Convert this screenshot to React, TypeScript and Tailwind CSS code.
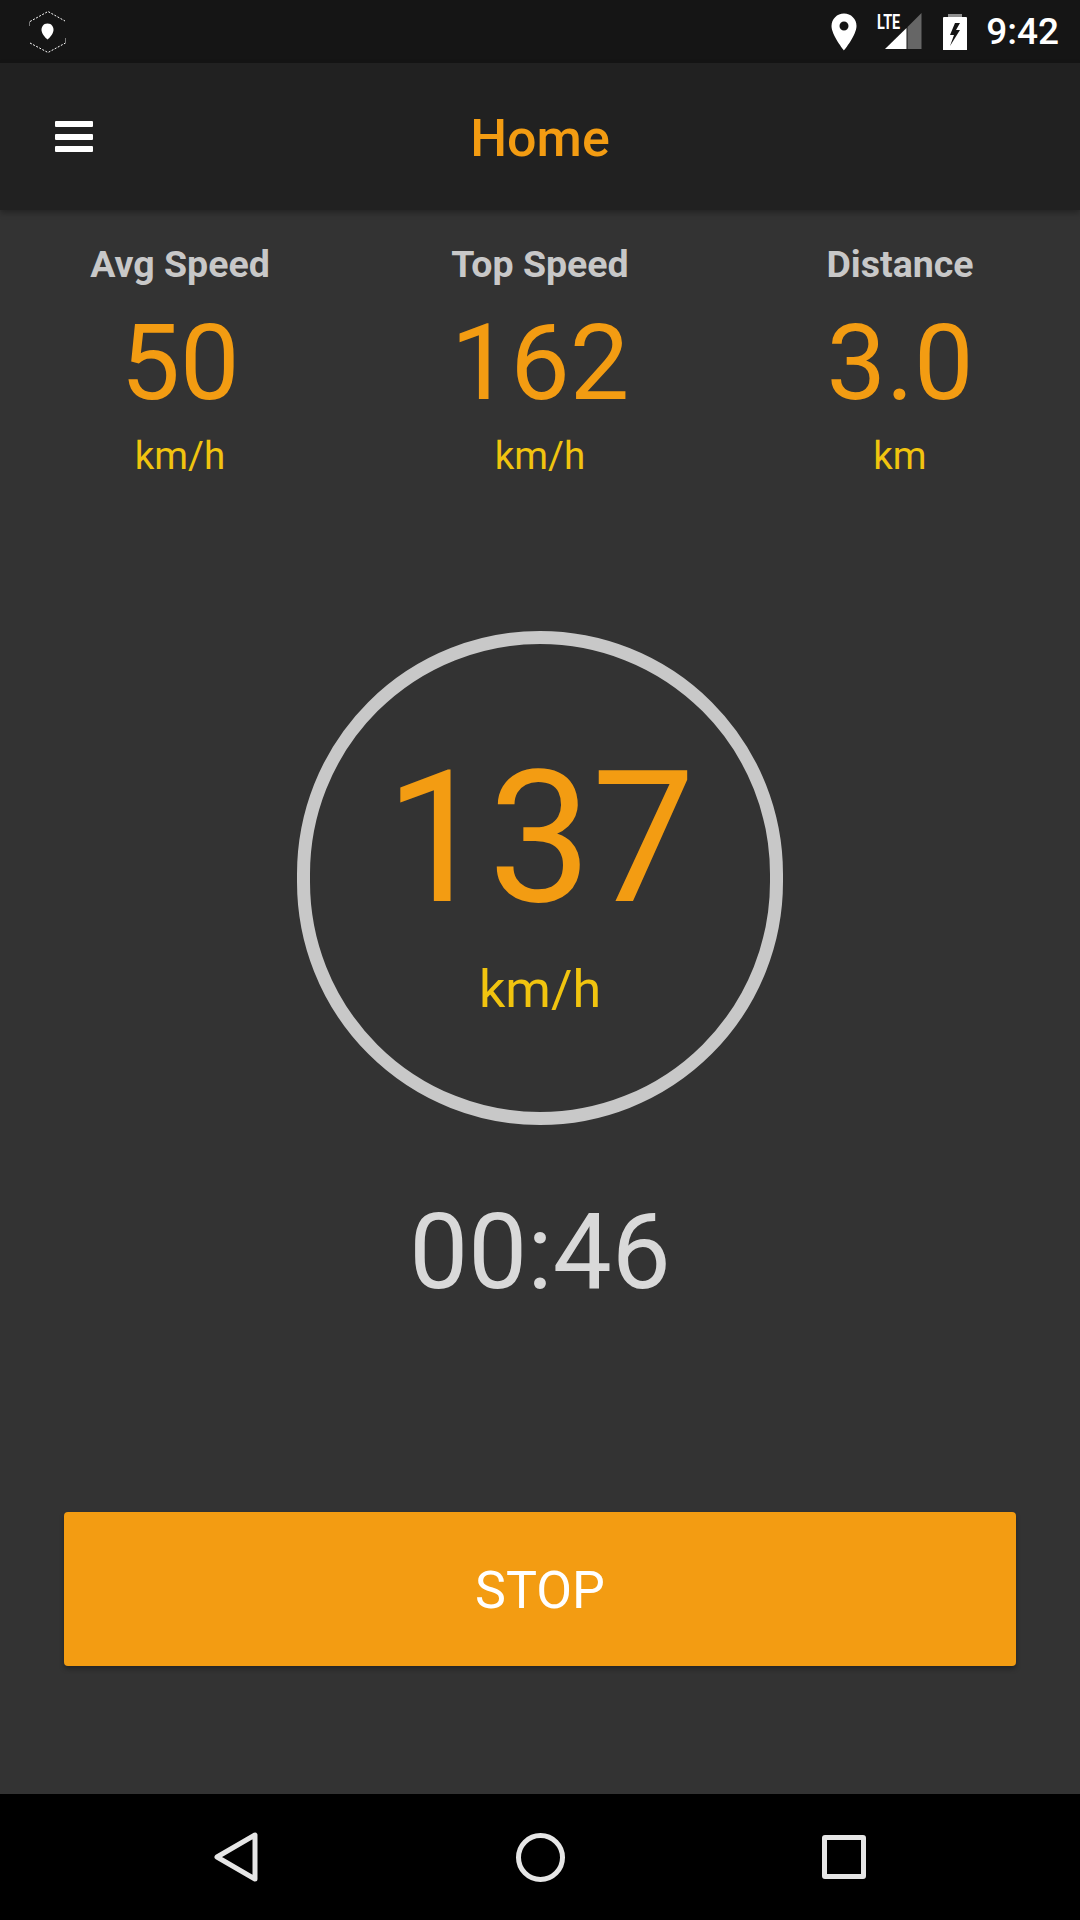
const stats = [
  { label: 'Avg Speed', value: '50', unit: 'km/h' },
  { label: 'Top Speed', value: '162', unit: 'km/h' },
  { label: 'Distance', value: '3.0', unit: 'km' },
]

function StatusBar() {
  return (
    <div className="h-[63px] bg-[#151515] flex items-center pl-[29px] pr-[21px]">
      <svg width="38" height="42" viewBox="0 0 38 42" fill="none">
        <path d="M1 10.500 L19 0.500 L36 10 M1 32 L19 41.500 L36.500 32" stroke="#fff" strokeWidth="1" strokeDasharray="2 1.500" />
        <path d="M0.500 10.500 V15 M36.500 27 V32" stroke="#777" strokeWidth="1" />
        <path d="M18.500 12.500 C23 12.500 24.500 16 24.500 19 C24.500 22.500 20.500 27 18.500 28.500 C16.500 27 12.500 22.500 12.500 19 C12.500 16 14 12.500 18.500 12.500 Z" fill="#fff" />
      </svg>
      <div className="ml-auto flex items-center">
        <svg width="26" height="38" viewBox="0 0 26 38">
          <path fillRule="evenodd" d="M13 0.500 C6 0.500 0.500 6 0.500 13 C0.500 22 13 37.500 13 37.500 C13 37.500 25.500 22 25.500 13 C25.500 6 20 0.500 13 0.500 Z M13 8.500 A4.500 4.500 0 1 1 13 17.500 A4.500 4.500 0 1 1 13 8.500 Z" fill="#fff" />
        </svg>
        <div className="relative w-[46px] h-[37px] ml-[19px]">
          <svg className="absolute left-0 top-0" width="46" height="37" viewBox="0 0 46 37">
            <path d="M45.500 0 V36 H31.500 V14 Z" fill="#666666" />
            <path d="M30.500 15 V36 H9 Z" fill="#fff" />
          </svg>
          <span className="absolute left-[1px] top-[-1px] text-[20px] leading-[20px] font-bold text-white scale-x-[0.72] origin-left">LTE</span>
        </div>
        <svg className="ml-[21px]" width="24" height="36" viewBox="0 0 24 36">
          <path d="M5 0 H19 V4 H5 Z" fill="#8f8f8f" />
          <path fillRule="evenodd" d="M1 3 H23 Q24 3 24 4 V36 H0 V4 Q0 3 1 3 Z M12 9 L7 21 H11 L7 32 L17 16 H13 L17 9 Z" fill="#fff" />
        </svg>
        <span className="ml-[19px] text-[37px] leading-none font-medium text-white">9:42</span>
      </div>
    </div>
  )
}

function Stat({ label, value, unit }: { label: string; value: string; unit: string }) {
  return (
    <div className="flex flex-col items-center">
      <div className="text-[37.500px] leading-[42px] font-bold text-[#c8c8c8]">{label}</div>
      <div className="mt-[17px] text-[106px] leading-[122px] text-[#f39c12]">{value}</div>
      <div className="mt-[10px] text-[38.500px] leading-[44px] text-[#f1c40f]">{unit}</div>
    </div>
  )
}

function NavBar() {
  return (
    <div className="h-[126px] bg-black grid grid-cols-[258px_1fr_258px] items-center">
      <svg className="justify-self-end" width="44" height="50" viewBox="0 0 44 50" fill="none">
        <path d="M41 3 V47 L3 25 Z" stroke="#e6e6e6" strokeWidth="5" strokeLinejoin="round" />
      </svg>
      <div className="justify-self-center w-[49px] h-[49px] rounded-full border-[5px] border-[#e6e6e6]" />
      <div className="justify-self-start w-[44px] h-[44px] rounded-[3px] border-[5px] border-[#e6e6e6]" />
    </div>
  )
}

export default function App() {
  return (
    <div className="w-[1080px] h-[1920px] flex flex-col bg-[#333333] font-['Roboto',sans-serif] overflow-hidden">
      <StatusBar />
      <header className="relative h-[147px] bg-[#212121] shadow-[0_3px_6px_rgba(0,0,0,0.3)] flex items-center justify-center">
        <div className="absolute left-[55px] top-[58px] w-[38px] flex flex-col gap-[6.500px]">
          <span className="h-[6px] bg-white rounded-[1px]" />
          <span className="h-[6px] bg-white rounded-[1px]" />
          <span className="h-[6px] bg-white rounded-[1px]" />
        </div>
        <h1 className="pt-[4px] text-[52px] font-medium text-[#f39c12]">Home</h1>
      </header>
      <main className="flex-1 flex flex-col items-center">
        <div className="w-full grid grid-cols-3 pt-[33px]">
          {stats.map(s => (
            <Stat key={s.label} {...s} />
          ))}
        </div>
        <div className="mt-[153px] w-[486px] h-[494px] rounded-full border-[13px] border-[#c8c8c8] flex flex-col items-center">
          <div className="mt-[86px] text-[184px] leading-[216px] text-[#f39c12]">137</div>
          <div className="mt-[13px] text-[52px] leading-[61px] text-[#f1c40f]">km/h</div>
        </div>
        <div className="mt-[67px] text-[105px] leading-[122px] text-[#d9d9d9]">00:46</div>
        <button className="mt-[198px] w-[952px] h-[154px] pt-[4px] rounded-[4px] bg-[#f39c12] text-[52px] text-white shadow-[0_3px_5px_rgba(0,0,0,0.3)]">
          STOP
        </button>
      </main>
      <NavBar />
    </div>
  )
}
